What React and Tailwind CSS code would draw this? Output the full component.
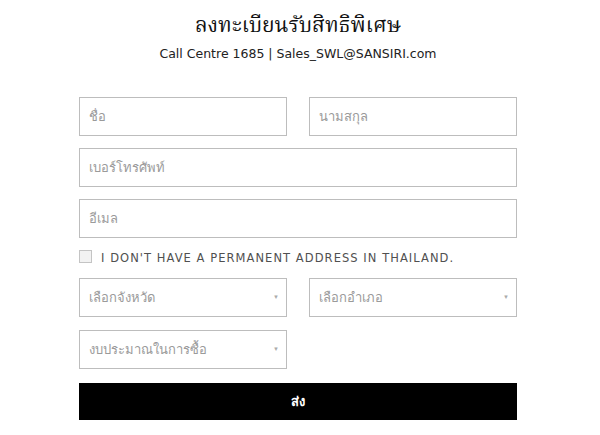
export default function App() {
  const box = "h-[39px] border border-[#bdbdbd] bg-white flex items-center px-[9px] text-[13px] text-[#9a9a9a]";
  const Sel = ({ label }) => (
    <div className={box + " justify-between pr-[7px]"}>
      <span>{label}</span>
      <span className="text-[6px] text-[#aaa]">▼</span>
    </div>
  );
  return (
    <div className="w-[600px] h-[435px] bg-white flex flex-col items-center" style={{ fontFamily: '"Noto Sans", "Liberation Sans", sans-serif' }}>
      <div className="mt-[11px] mr-[4px] text-[21px] leading-[32px] text-[#111]" style={{ fontFamily: '"Noto Serif Thai","Loma","Noto Sans Thai", serif' }}>ลงทะเบียนรับสิทธิพิเศษ</div>
      <div className="mt-[3px] mr-[4px] leading-[16px] text-[#222]" style={{ fontFamily: '"DejaVu Sans", sans-serif', fontSize: '12.5px' }}>Call Centre 1685 | Sales_SWL@SANSIRI.com</div>
      <div className="w-[438px] mr-[4px] mt-[35px] flex flex-col">
        <div className="grid grid-cols-2 gap-[22px]">
          <div className={box}>ชื่อ</div>
          <div className={box}>นามสกุล</div>
        </div>
        <div className={box + " mt-[12px]"}>เบอร์โทรศัพท์</div>
        <div className={box + " mt-[12px]"}>อีเมล</div>
        <div className="flex items-center gap-[9px] h-[14px] mt-[11px]">
          <div className="w-[13px] h-[13px] border border-[#c4c4c4] bg-[#f2f2f2]" />
          <span className="text-[11.5px] tracking-[1.05px] text-[#505050] pt-[6px]" style={{ fontFamily: '"DejaVu Sans", sans-serif' }}>I DON'T HAVE A PERMANENT ADDRESS IN THAILAND.</span>
        </div>
        <div className="grid grid-cols-2 gap-[22px] mt-[15px]">
          <Sel label="เลือกจังหวัด" />
          <Sel label="เลือกอำเภอ" />
        </div>
        <div className="grid grid-cols-2 gap-[22px] mt-[13px]">
          <Sel label="งบประมาณในการซื้อ" />
        </div>
        <div className="h-[37px] mt-[14px] bg-black flex items-center justify-center text-white text-[13px] font-bold">ส่ง</div>
      </div>
    </div>
  );
}
